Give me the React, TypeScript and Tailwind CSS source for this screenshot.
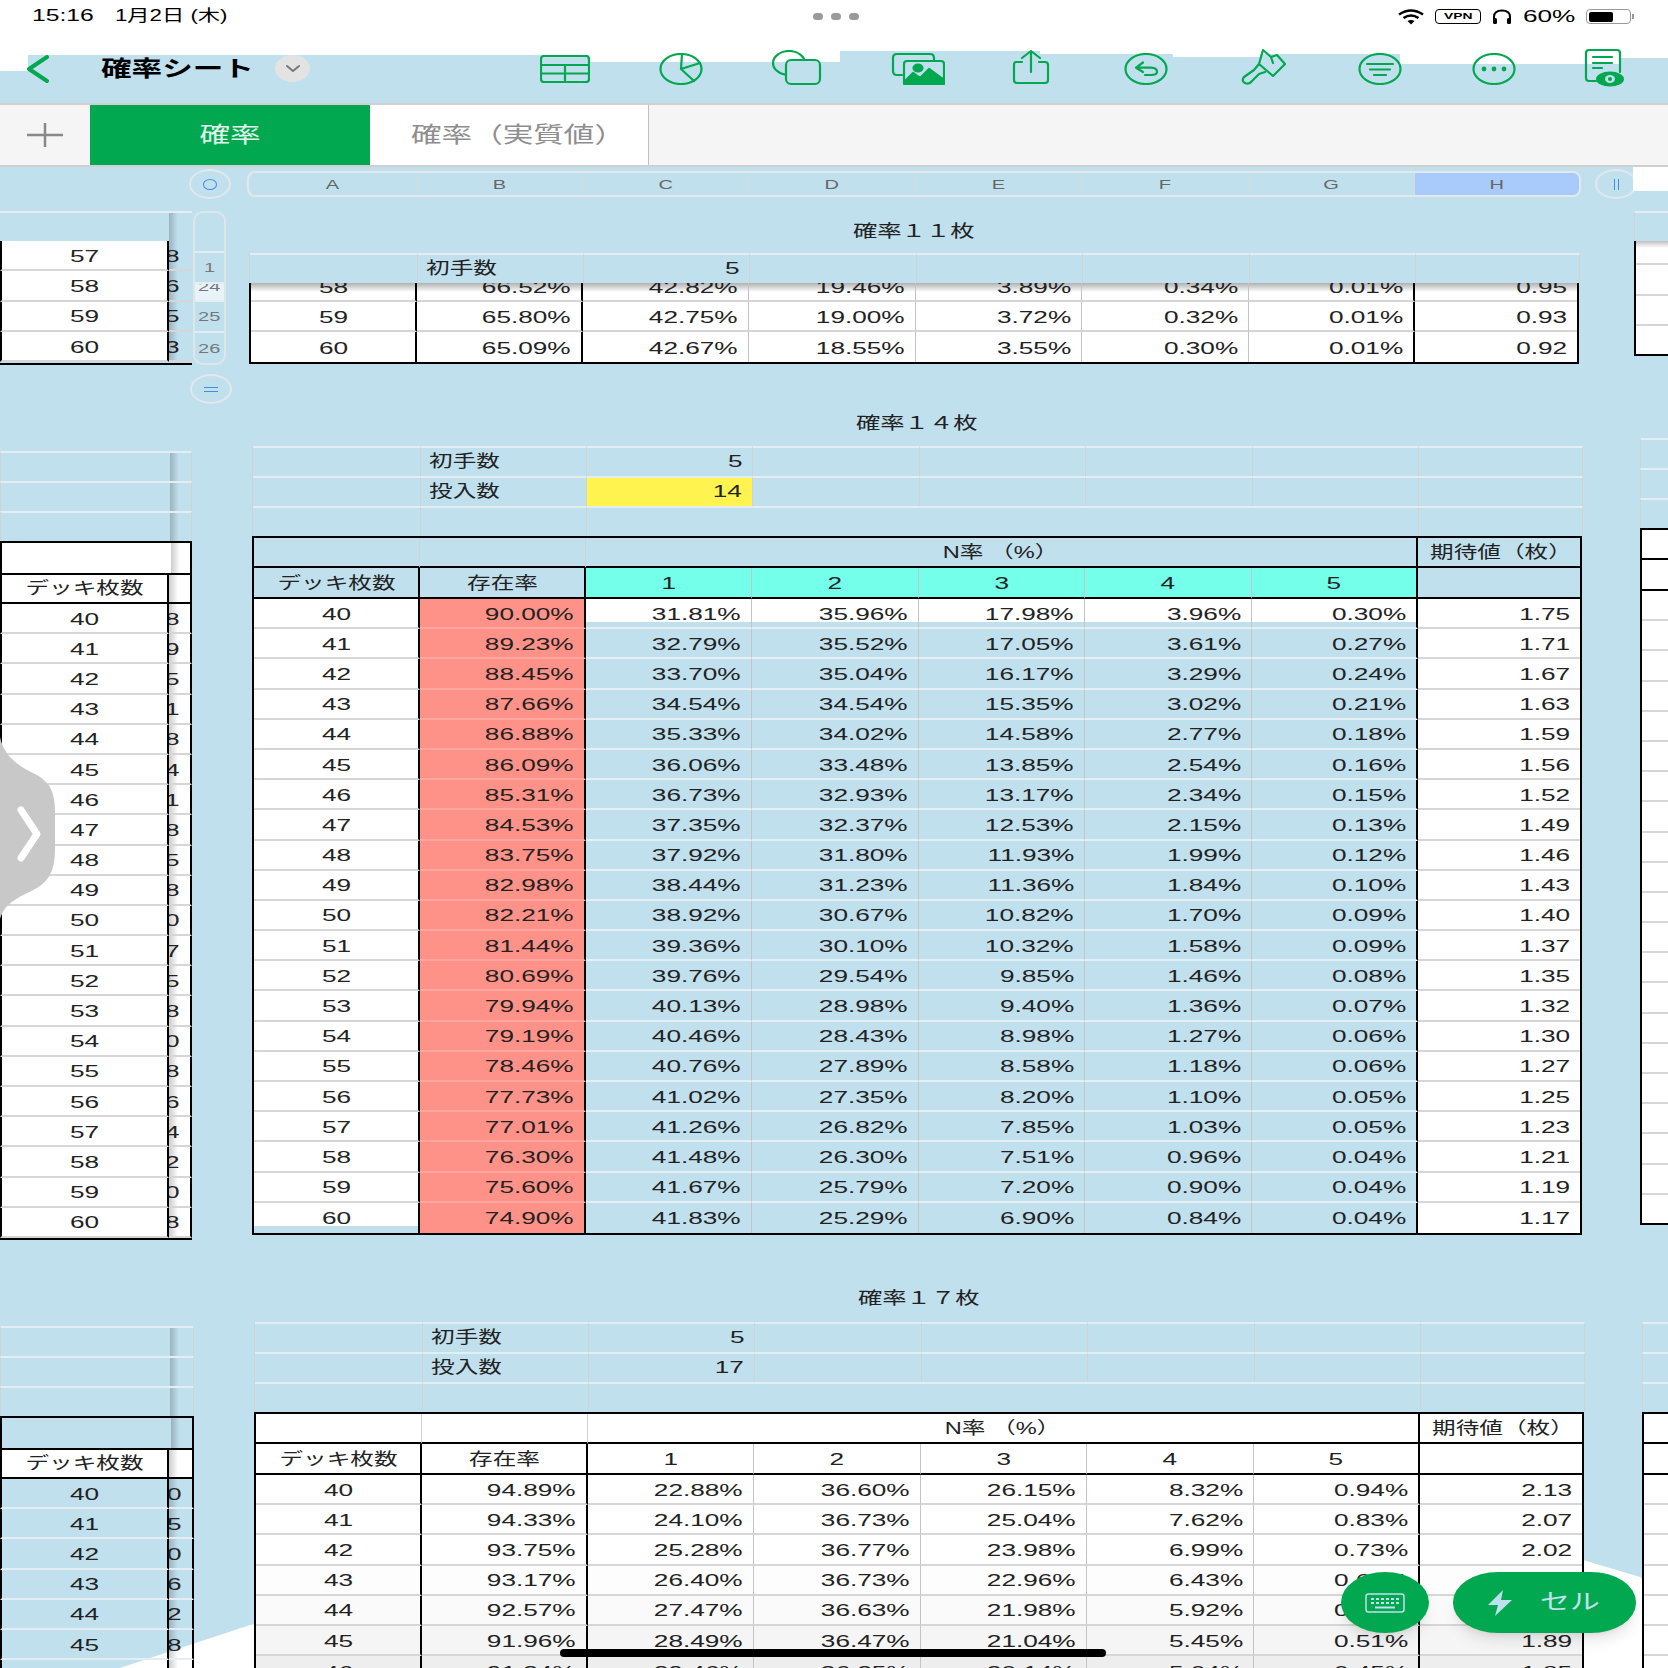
import type { ReactNode } from "react";
import clsx from "clsx";

const GREEN = "#02a84f";

const TABLE_14 = [
  "40 90.00% 31.81% 35.96% 17.98% 3.96% 0.30% 1.75",
  "41 89.23% 32.79% 35.52% 17.05% 3.61% 0.27% 1.71",
  "42 88.45% 33.70% 35.04% 16.17% 3.29% 0.24% 1.67",
  "43 87.66% 34.54% 34.54% 15.35% 3.02% 0.21% 1.63",
  "44 86.88% 35.33% 34.02% 14.58% 2.77% 0.18% 1.59",
  "45 86.09% 36.06% 33.48% 13.85% 2.54% 0.16% 1.56",
  "46 85.31% 36.73% 32.93% 13.17% 2.34% 0.15% 1.52",
  "47 84.53% 37.35% 32.37% 12.53% 2.15% 0.13% 1.49",
  "48 83.75% 37.92% 31.80% 11.93% 1.99% 0.12% 1.46",
  "49 82.98% 38.44% 31.23% 11.36% 1.84% 0.10% 1.43",
  "50 82.21% 38.92% 30.67% 10.82% 1.70% 0.09% 1.40",
  "51 81.44% 39.36% 30.10% 10.32% 1.58% 0.09% 1.37",
  "52 80.69% 39.76% 29.54% 9.85% 1.46% 0.08% 1.35",
  "53 79.94% 40.13% 28.98% 9.40% 1.36% 0.07% 1.32",
  "54 79.19% 40.46% 28.43% 8.98% 1.27% 0.06% 1.30",
  "55 78.46% 40.76% 27.89% 8.58% 1.18% 0.06% 1.27",
  "56 77.73% 41.02% 27.35% 8.20% 1.10% 0.05% 1.25",
  "57 77.01% 41.26% 26.82% 7.85% 1.03% 0.05% 1.23",
  "58 76.30% 41.48% 26.30% 7.51% 0.96% 0.04% 1.21",
  "59 75.60% 41.67% 25.79% 7.20% 0.90% 0.04% 1.19",
  "60 74.90% 41.83% 25.29% 6.90% 0.84% 0.04% 1.17",
].map((r) => r.split(" "));

const TABLE_17 = [
  "40 94.89% 22.88% 36.60% 26.15% 8.32% 0.94% 2.13",
  "41 94.33% 24.10% 36.73% 25.04% 7.62% 0.83% 2.07",
  "42 93.75% 25.28% 36.77% 23.98% 6.99% 0.73% 2.02",
  "43 93.17% 26.40% 36.73% 22.96% 6.43% 0.65% 1.97",
  "44 92.57% 27.47% 36.63% 21.98% 5.92% 0.58% 1.93",
  "45 91.96% 28.49% 36.47% 21.04% 5.45% 0.51% 1.89",
  "46 91.34% 29.46% 36.25% 20.14% 5.04% 0.45% 1.85",
].map((r) => r.split(" "));

const TINTS = ["bg-white", "bg-white", "bg-white", "bg-[#fdfdfd]", "bg-[#fafafa]", "bg-[#f5f5f5]", "bg-[#eeeeee]"];

const META_COLS = "grid grid-cols-[168px_166px_166px_167px_166px_167px_166px_164px] w-[1330px]";
const DATA_COLS = "grid grid-cols-[166px_166px_166px_167px_166px_167px_166px_162px]";
const SHADOW = "bg-[linear-gradient(90deg,rgba(0,0,0,.2),transparent_9px)]";

// the screenshot is stretched sideways, so the text is too
function T({ children, align = "right", className }: { children: ReactNode; align?: "left" | "center" | "right"; className?: string }) {
  const wide = typeof children === "string" && /[^\x00-\x7f]/.test(children);
  return (
    <span
      className={clsx(
        "inline-block whitespace-nowrap",
        wide ? "scale-x-[1.39]" : "scale-x-[1.54]",
        align === "left" && "origin-left",
        align === "center" && "origin-center",
        align === "right" && "origin-right",
        className
      )}
    >
      {children}
    </span>
  );
}

function Cell({ children, align = "right", className }: { children?: ReactNode; align?: "left" | "center" | "right"; className?: string }) {
  return (
    <div
      className={clsx(
        "flex items-center overflow-hidden",
        align === "left" && "justify-start pl-[8px]",
        align === "center" && "justify-center",
        align === "right" && "justify-end pr-[10px]",
        className
      )}
    >
      {children !== undefined && <T align={align}>{children}</T>}
    </div>
  );
}

function MetaCell({ children, align, className }: { children?: ReactNode; align?: "left" | "center" | "right"; className?: string }) {
  return <Cell align={align} className={clsx("h-[30px] pb-[2px] border-t-2 border-t-[#e4edf1] border-r border-r-[#cfd3d5]", className)}>{children}</Cell>;
}

function MetaRows({ count, highlight }: { count?: string; highlight?: boolean }) {
  return (
    <div className={clsx(META_COLS, "border-l border-l-[#cfd3d5]")}>
      <MetaCell />
      <MetaCell align="left">初手数</MetaCell>
      <MetaCell>5</MetaCell>
      <MetaCell />
      <MetaCell />
      <MetaCell />
      <MetaCell />
      <MetaCell />
      {count && (
        <>
          <MetaCell />
          <MetaCell align="left">投入数</MetaCell>
          <MetaCell className={highlight ? "bg-[#fff350]" : ""}>{count}</MetaCell>
          <MetaCell />
          <MetaCell />
          <MetaCell />
          <MetaCell />
          <MetaCell />
          <MetaCell />
          <MetaCell />
          <MetaCell className="col-span-5" />
          <MetaCell />
        </>
      )}
    </div>
  );
}

function DataRow({ row, index, coloured, last, tint }: { row: string[]; index: number; coloured?: boolean; last?: boolean; tint?: string }) {
  const plain = tint ?? "bg-white";
  const blue = coloured && index > 0;
  // the first coloured row still has a strip of the sheet colour at its foot
  const first = coloured && index === 0 ? "bg-[linear-gradient(#ffffff_82%,#c1e0ee_82%)] border-b-[#e6eff3]" : clsx(plain, "border-b-[#d6d6d6]");
  const body = blue ? "bg-transparent border-b-[#e6eff3]" : first;
  return (
    <>
      {row.map((value, i) => (
        <Cell
          key={i}
          align={i === 0 ? "center" : "right"}
          className={clsx(
            "h-[30.2px] pt-[2px]",
            !last && "border-b-2",
            i === 0 && "border-b-[#d6d6d6] border-r-2 border-r-black",
            i === 0 && (coloured && last ? "bg-[linear-gradient(#ffffff_78%,#c1e0ee_78%)]" : plain),
            i === 1 && (coloured ? "bg-[#ff9288] border-b-[#ffa79f] border-r-2 border-r-black" : clsx(plain, "border-b-[#d6d6d6] border-r-2 border-r-black")),
            i > 1 && i < 6 && clsx(body, "border-r border-r-[#c4c4c4]"),
            i === 6 && clsx(body, "border-r-2 border-r-black"),
            i === 7 && clsx(plain, "border-b-[#d6d6d6]")
          )}
        >
          {value}
        </Cell>
      ))}
    </>
  );
}

function BigTable({ rows, coloured, tinted, count }: { rows: string[][]; coloured?: boolean; tinted?: boolean; count: string }) {
  const cellBg = coloured ? "" : "bg-white";
  return (
    <div className="w-[1330px]">
      <MetaRows count={count} highlight={coloured} />
      <div className={clsx(DATA_COLS, "border-2 border-black")}>
        <Cell className={clsx("h-[30px] border-b-2 border-b-black border-r border-r-[#cfd3d5]", cellBg)} />
        <Cell className={clsx("h-[30px] border-b-2 border-b-black border-r border-r-[#cfd3d5]", cellBg)} />
        <Cell align="center" className={clsx("col-span-5 h-[30px] border-b-2 border-b-black border-r-2 border-r-black", cellBg)}>N率 （%）</Cell>
        <Cell align="left" className={clsx("h-[30px] border-b-2 border-b-black pl-[12px]", cellBg)}>期待値（枚）</Cell>

        <Cell align="center" className={clsx("h-[31px] pt-[1px] border-b-2 border-b-black border-r-2 border-r-black", cellBg)}>デッキ枚数</Cell>
        <Cell align="center" className={clsx("h-[31px] pt-[1px] border-b-2 border-b-black border-r-2 border-r-black", cellBg)}>存在率</Cell>
        {["1", "2", "3", "4", "5"].map((n) => (
          <Cell
            key={n}
            align="center"
            className={clsx(
              "h-[31px] pt-[1px] border-b-2 border-b-black",
              coloured ? "bg-[#73ffe9]" : "bg-white",
              n === "5" ? "border-r-2 border-r-black" : "border-r border-r-[#c4c4c4]"
            )}
          >
            {n}
          </Cell>
        ))}
        <Cell className={clsx("h-[31px] border-b-2 border-b-black", cellBg)} />

        {rows.map((row, i) => (
          <DataRow
            key={row[0]}
            row={row}
            index={i}
            coloured={coloured}
            last={i === rows.length - 1}
            tint={tinted ? TINTS[i] : undefined}
          />
        ))}
      </div>
    </div>
  );
}

function LeftRow({ label, tail, blue, closed, height = "h-[30.2px]" }: { label?: string; tail?: string; blue?: boolean; closed?: boolean; height?: string }) {
  return (
    <div className={clsx("grid grid-cols-[169px_1fr]", height)}>
      <Cell
        align="center"
        className={clsx(
          "pt-[2px] border-l-2 border-l-black border-r-2 border-r-black border-b-2",
          blue ? "border-b-[#e4edf1]" : "bg-white border-b-[#d6d6d6]"
        )}
      >
        {label}
      </Cell>
      <div
        className={clsx(
          "flex items-center justify-end overflow-hidden pt-[2px] border-b-2",
          SHADOW,
          blue ? "border-b-[#e4edf1]" : "border-b-[#d6d6d6]",
          closed && !blue && "bg-white",
          closed ? "pr-[11px] border-r-2 border-r-black" : "pr-[13px]"
        )}
      >
        {tail && <T>{tail}</T>}
      </div>
    </div>
  );
}

function LeftBlank() {
  return (
    <div className={clsx("grid grid-cols-[169px_1fr] h-[30px] border-t-2 border-t-[#e4edf1] border-l border-l-[#cfd3d5] border-r border-r-[#cfd3d5]")}>
      <div />
      <div className={SHADOW} />
    </div>
  );
}

function LeftTable({ tails, blue, width, rows }: { tails: string; blue?: boolean; width: string; rows: string[] }) {
  return (
    <div className={width}>
      <LeftBlank />
      <LeftBlank />
      <LeftBlank />
      <div className={clsx("grid grid-cols-[169px_1fr] h-[32px] border-2 border-black border-b-0", blue ? "" : "bg-white")}>
        <div />
        <div className={SHADOW} />
      </div>
      <div className="grid grid-cols-[169px_1fr] h-[31px] border-y-2 border-y-black bg-white">
        <Cell align="center" className="border-x-2 border-x-black">デッキ枚数</Cell>
        <div className={clsx(SHADOW, "border-r-2 border-r-black")} />
      </div>
      {rows.map((label, i) => (
        <LeftRow key={label} label={label} tail={tails[i]} blue={blue} closed />
      ))}
      <div className="h-[2px] bg-black" />
    </div>
  );
}

function RightSliver({ rows, start }: { rows: number; start: string }) {
  return (
    <div className={clsx("flex-1", start)}>
      {[0, 1, 2].map((i) => (
        <div key={i} className="h-[30px] border-t-2 border-t-[#e4edf1] border-l border-l-[#cfd3d5]" />
      ))}
      <div className="border-l-2 border-black bg-white">
        <div className="h-[32px] border-t-2 border-b-2 border-black" />
        <div className="h-[31px] border-b-2 border-black" />
        {Array.from({ length: rows }, (_, i) => (
          <div key={i} className={clsx("h-[30.2px] border-b-2", i === rows - 1 ? "border-b-black" : "border-b-[#d6d6d6]")} />
        ))}
      </div>
    </div>
  );
}

function Title({ children, className }: { children: string; className?: string }) {
  return (
    <div className={clsx("h-[42px] w-[1330px] flex items-center justify-center text-[17.5px]", className)}>
      <T align="center">{children}</T>
    </div>
  );
}

function ColumnHeader() {
  const cols = [
    ["A", "w-[168px]"],
    ["B", "w-[166px]"],
    ["C", "w-[166px]"],
    ["D", "w-[167px]"],
    ["E", "w-[166px]"],
    ["F", "w-[167px]"],
    ["G", "w-[166px]"],
  ];
  return (
    <div className="relative flex items-center h-[26px] mt-[4px] pl-[189px] text-[13px] text-[#666666]">
      <div className="w-[42px] h-[30px] rounded-[50%] border-2 border-[#e2e8eb] flex items-center justify-center">
        <div className="w-[14px] h-[11px] rounded-[50%] border border-[#3f8fdc]" />
      </div>
      <div className="ml-[16px] w-[1334px] h-[26px] flex rounded-[8px] border-2 border-[#e2e8eb] overflow-hidden">
        {cols.map(([name, width]) => (
          <div key={name} className={clsx(width, "flex items-center justify-center border-r border-r-[#d5dcdf]")}>
            <T align="center">{name}</T>
          </div>
        ))}
        <div className="flex-1 flex items-center justify-center bg-[#a9cbfb]">
          <T align="center">H</T>
        </div>
      </div>
      <div className="ml-[14px] w-[42px] h-[30px] rounded-[50%] border-2 border-[#e2e8eb] flex items-center justify-center gap-[3px]">
        <div className="w-px h-[11px] bg-[#3f8fdc]" />
        <div className="w-px h-[11px] bg-[#3f8fdc]" />
      </div>
      <div className="flex-1 self-start h-[24px] -mt-[4px] ml-[-4px] bg-white" />
    </div>
  );
}

function Section1() {
  const rows = [
    ["58", "66.52%", "42.82%", "19.46%", "3.89%", "0.34%", "0.01%", "0.95"],
    ["59", "65.80%", "42.75%", "19.00%", "3.72%", "0.32%", "0.01%", "0.93"],
    ["60", "65.09%", "42.67%", "18.55%", "3.55%", "0.30%", "0.01%", "0.92"],
  ];
  return (
    <section className="relative z-10 flex items-start h-[154px] mt-[14px]">
      <div className="flex w-[226px] shrink-0">
        <div className="w-[192px] border-b-2 border-b-black">
          <div className="grid grid-cols-[169px_1fr] h-[30px] border-t-2 border-t-[#e4edf1]">
            <div />
            <div className={SHADOW} />
          </div>
          {[["57", "8"], ["58", "6"], ["59", "5"], ["60", "3"]].map(([label, tail]) => (
            <LeftRow key={label} label={label} tail={tail} height="h-[30.3px]" />
          ))}
        </div>
        <div className="ml-px w-[33px] h-[154px] rounded-[10px] border-2 border-[#dfe6ea] overflow-hidden text-[#777777] text-[13px]">
          <div className="h-[40px] border-b-2 border-b-[#e4edf1]" />
          <Cell align="center" className="h-[31px] border-b-2 border-b-[#e4edf1]">1</Cell>
          <div className="h-[18px] overflow-hidden flex items-end justify-center border-b-2 border-b-[#e4edf1] bg-white/60">
            <T align="center" className="leading-[26px]">24</T>
          </div>
          <Cell align="center" className="h-[31px] border-b-2 border-b-[#e4edf1]">25</Cell>
          <Cell align="center" className="h-[30px]">26</Cell>
        </div>
      </div>
      <div className="ml-[23px] w-[1330px] shrink-0">
        <Title>確率１１枚</Title>
        <MetaRows />
        <div className={clsx(DATA_COLS, "border-x-2 border-b-2 border-black")}>
          {rows[0].map((value, i) => (
            <div
              key={i}
              className={clsx(
                "h-[19px] overflow-hidden flex items-end border-b-2 border-b-[#d6d6d6] bg-[linear-gradient(#b0b0b0,#ffffff_9px)]",
                i === 0 ? "justify-center" : "justify-end pr-[10px]",
                (i === 0 || i === 1 || i === 6) && "border-r-2 border-r-black",
                i > 1 && i < 6 && "border-r border-r-[#c4c4c4]"
              )}
            >
              <T align={i === 0 ? "center" : "right"} className="leading-[24px] shrink-0">{value}</T>
            </div>
          ))}
          <DataRow row={rows[1]} index={0} />
          <DataRow row={rows[2]} index={0} last />
        </div>
      </div>
      <div className="ml-[55px] flex-1">
        <div className="h-[30px] border-t-2 border-t-[#e4edf1] border-l border-l-[#cfd3d5]" />
        <div className="border-l-2 border-b-2 border-black bg-white">
          <div className="h-[24px] border-b-2 border-b-[#d6d6d6] bg-[linear-gradient(#c0c0c0,#ffffff_7px)]" />
          <div className="h-[31px] border-b-2 border-b-[#d6d6d6]" />
          <div className="h-[30px] border-b-2 border-b-[#d6d6d6]" />
          <div className="h-[28px]" />
        </div>
      </div>
    </section>
  );
}

function Section2() {
  return (
    <section className="relative z-10 flex items-start h-[834px] mt-[39px]">
      <div className="w-[226px] shrink-0 pt-[47px]">
        <LeftTable width="w-[192px]" tails="895184185807580864208" rows={TABLE_14.map((r) => r[0])} />
      </div>
      <div className="ml-[26px] w-[1330px] shrink-0">
        <Title className="pb-[2px]">確率１４枚</Title>
        <BigTable rows={TABLE_14} coloured count="14" />
      </div>
      <RightSliver rows={21} start="ml-[58px] pt-[34px]" />
    </section>
  );
}

function Section3() {
  return (
    <section className="relative z-10 flex items-start mt-[42px]">
      <div className="w-[226px] shrink-0 pt-[46px]">
        <LeftTable width="w-[194px]" tails="0506281" blue rows={TABLE_17.map((r) => r[0])} />
      </div>
      <div className="ml-[28px] w-[1330px] shrink-0">
        <Title className="pb-[4px]">確率１７枚</Title>
        <BigTable rows={TABLE_17} tinted count="17" />
      </div>
      <RightSliver rows={7} start="ml-[58px] pt-[42px]" />
    </section>
  );
}

function Sheet() {
  return (
    <div className="relative h-[1501px] overflow-hidden bg-[#c1e0ee]">
      <svg className="absolute inset-0" width="1668" height="1501" viewBox="0 0 1668 1501">
        <path d="M120 1501 L250 1458 C600 1393 1300 1378 1583 1393 L1640 1410 L1668 1433 L1668 1501 Z" fill="#ffffff" />
      </svg>
      <ColumnHeader />
      <Section1 />
      <Section2 />
      <Section3 />
      <div className="absolute z-20 left-[190px] top-[207px] w-[42px] h-[30px] rounded-[50%] border-2 border-[#e2e8eb] flex flex-col items-center justify-center gap-[3px]">
        <div className="w-[14px] h-px bg-[#3f8fdc]" />
        <div className="w-[14px] h-px bg-[#3f8fdc]" />
      </div>
    </div>
  );
}

const stroke = { fill: "none", stroke: GREEN, strokeWidth: 2.2, strokeLinecap: "round" as const, strokeLinejoin: "round" as const };

function Toolbar() {
  return (
    <div className="relative z-10 flex items-center h-[49px] pl-[27px] -mt-[1px]">
      <svg width="22" height="28" viewBox="0 0 22 28" {...stroke} strokeWidth={4}>
        <path d="M20 2 L2 14 L20 26" />
      </svg>
      <T align="left" className="ml-[52px] text-[22px] font-bold text-black">確率シート</T>
      <div className="ml-[64px] w-[35px] h-[27px] rounded-[50%] bg-[#e3e3e3] flex items-center justify-center">
        <svg width="16" height="9" viewBox="0 0 16 9" fill="none" stroke="#777777" strokeWidth="2" strokeLinecap="round" strokeLinejoin="round">
          <path d="M2 2 L8 7 L14 2" />
        </svg>
      </div>
      <svg className="ml-[230px]" width="50" height="28" viewBox="0 0 50 28" {...stroke}>
        <rect x="1" y="1" width="48" height="26" rx="3" />
        <path d="M1 10 H49 M1 18.5 H49 M25 10 V27" />
      </svg>
      <svg className="ml-[69px]" width="44" height="32" viewBox="0 0 44 32" {...stroke}>
        <ellipse cx="22" cy="16" rx="20.5" ry="15" />
        <path d="M22 16 L23 1 M22 16 L41 10 M22 16 L35 28" />
      </svg>
      <svg className="ml-[69px] -mt-[2px]" width="50" height="36" viewBox="0 0 50 36" {...stroke}>
        <ellipse cx="17" cy="13" rx="16" ry="12" />
        <rect x="14" y="10" width="34" height="24" rx="5" fill="#c1e0ee" />
      </svg>
      <svg className="ml-[69px]" width="54" height="34" viewBox="0 0 54 34" {...stroke}>
        <path d="M11 23 H6 Q2 23 2 19 V6 Q2 2 6 2 H39 Q43 2 43 6 V9" />
        <rect x="13" y="9" width="40" height="23" rx="3" />
        <path d="M13 30 L22 21 L29 26 L38 17 L53 28 V32 H13 Z" fill={GREEN} />
        <ellipse cx="27" cy="16" rx="4.5" ry="3.5" fill={GREEN} />
      </svg>
      <svg className="ml-[66px] -mt-[4px]" width="40" height="36" viewBox="0 0 40 36" {...stroke}>
        <path d="M11 13 H5 Q3 13 3 16 V31 Q3 34 6 34 H34 Q37 34 37 31 V16 Q37 13 34 13 H28" />
        <path d="M20 2 V23 M11 9 L20 2 L29 9" />
      </svg>
      <svg className="ml-[73px]" width="44" height="32" viewBox="0 0 44 32" {...stroke}>
        <ellipse cx="22" cy="16" rx="20.5" ry="15" />
        <path d="M19 9.5 L12 14.7 L19 19 M12 14.7 H27 Q33 15 33 18.7 Q33 22 27 22 H21" />
      </svg>
      <svg className="ml-[72px] -mt-[4px]" width="46" height="38" viewBox="0 0 46 38" {...stroke}>
        <path d="M23 2 L31 9 L37 7 L45 16 L33 28 L19 16 Z" />
        <path d="M31 9 L33 15 M19 16 L14 22 L4 29 Q1 33 5 35 Q9 37 12 33 L19 26 L25 24" />
      </svg>
      <svg className="ml-[72px]" width="44" height="32" viewBox="0 0 44 32" {...stroke}>
        <ellipse cx="22" cy="16" rx="20.5" ry="15" />
        <path d="M9 11 H35 M12 16.5 H32 M16 22 H28" />
      </svg>
      <svg className="ml-[70px]" width="44" height="32" viewBox="0 0 44 32" {...stroke}>
        <ellipse cx="22" cy="16" rx="20.5" ry="15" />
        <circle cx="12" cy="16" r="2.4" fill={GREEN} stroke="none" />
        <circle cx="22" cy="16" r="2.4" fill={GREEN} stroke="none" />
        <circle cx="32" cy="16" r="2.4" fill={GREEN} stroke="none" />
      </svg>
      <svg className="ml-[68px] -mt-[2px]" width="42" height="40" viewBox="0 0 42 40" {...stroke}>
        <path d="M12 33 H5 Q2 33 2 30 V5 Q2 2 5 2 H33 Q36 2 36 5 V24" />
        <path d="M9 9 H28 M9 15 H28 M9 20 H18" />
        <ellipse cx="26" cy="31" rx="14" ry="7.5" fill={GREEN} stroke="none" />
        <ellipse cx="26" cy="31" rx="5" ry="4" fill="#c1e0ee" stroke="none" />
        <circle cx="26" cy="31" r="2" fill={GREEN} stroke="none" />
      </svg>
    </div>
  );
}

function StatusBar() {
  return (
    <div className="relative z-10 flex items-center h-[32px] pl-[32px] text-[16px] text-black">
      <T align="left">15:16</T>
      <T align="left" className="ml-[43px]">1月2日 (木)</T>
      <div className="absolute left-[813px] top-[13px] flex gap-[8px]">
        <div className="w-[10px] h-[7px] rounded-full bg-[#9a9a9a]" />
        <div className="w-[10px] h-[7px] rounded-full bg-[#9a9a9a]" />
        <div className="w-[10px] h-[7px] rounded-full bg-[#9a9a9a]" />
      </div>
      <div className="absolute left-[1397px] top-[8px] flex items-center">
        <svg width="28" height="16" viewBox="0 0 28 16" fill="none" stroke="#000000" strokeWidth="2.6">
          <path d="M2 5.5 Q14 -2.5 26 5.5 M6.5 9 Q14 4 21.5 9" />
          <path d="M10.5 12 Q14 10 17.5 12 L14 15.5 Z" fill="#000000" stroke="none" />
        </svg>
        <div className="ml-[10px] w-[46px] h-[15px] rounded-[4px] border-[1.5px] border-black flex items-center justify-center text-[9px] font-bold leading-none">
          <T align="center">VPN</T>
        </div>
        <svg className="ml-[11px]" width="20" height="16" viewBox="0 0 20 16" fill="none" stroke="#000000" strokeWidth="2">
          <path d="M2 12 V8 Q2 1.5 10 1.5 Q18 1.5 18 8 V12" />
          <rect x="1" y="9" width="4" height="6" rx="1.5" fill="#000000" stroke="none" />
          <rect x="15" y="9" width="4" height="6" rx="1.5" fill="#000000" stroke="none" />
        </svg>
        <T align="left" className="ml-[11px] text-[17px]">60%</T>
        <div className="ml-[29px] w-[45px] h-[15px] rounded-[4px] border-[1.5px] border-[#999999] p-[1.5px]">
          <div className="w-[60%] h-full rounded-[2px] bg-black" />
        </div>
        <div className="ml-px w-[2px] h-[5px] bg-[#999999]" />
      </div>
    </div>
  );
}

function Header() {
  // the blue band has a stepped top edge in the capture
  const steps = [
    "w-[28px] h-[71px]",
    "w-[561px] h-[55px]",
    "w-[251px] h-[62px]",
    "w-[200px] h-[51px]",
    "w-[133px] h-[54px]",
    "w-[87px] h-[57px]",
    "w-[140px] h-[54px]",
    "w-[220px] h-[64px]",
    "w-[48px] h-[58px]",
  ];
  return (
    <div className="relative h-[103px] bg-[#c1e0ee]">
      <div className="absolute inset-x-0 top-0 flex items-start">
        {steps.map((s) => (
          <div key={s} className={clsx(s, "bg-white")} />
        ))}
      </div>
      <StatusBar />
      <div className="h-[13px]" />
      <Toolbar />
    </div>
  );
}

function Tabs() {
  return (
    <div className="flex h-[64px] border-y-2 border-y-[#d0d0d0] bg-[#f5f5f5] text-[22px]">
      <div className="w-[90px] flex items-center justify-center">
        <svg width="36" height="24" viewBox="0 0 36 24" stroke="#888888" strokeWidth="2.5">
          <path d="M0 12 H36 M18 0 V24" />
        </svg>
      </div>
      <div className="w-[280px] flex items-center justify-center bg-[#02a84f] text-[#e4f5ee]">
        <T align="center">確率</T>
      </div>
      <div className="w-[279px] flex items-center justify-center pl-[18px] bg-white border-r border-r-[#c0c0c0] text-[#8e8e8e]">
        <T align="center">確率（実質値）</T>
      </div>
    </div>
  );
}

function FloatingButtons() {
  return (
    <>
      <div className="absolute z-30 left-[1341px] top-[1572px] w-[88px] h-[61px] rounded-[50%] bg-[#02a84f] shadow-lg flex items-center justify-center">
        <svg width="40" height="20" viewBox="0 0 40 20" fill="none" stroke="#c1e0ee" strokeWidth="1.5">
          <rect x="1" y="1" width="38" height="18" rx="2.5" />
          <path d="M6 6 H34 M6 10 H34" strokeDasharray="3 2" strokeWidth="2" />
          <path d="M10 14.5 H30" strokeWidth="2" />
        </svg>
      </div>
      <div className="absolute z-30 left-[1453px] top-[1572px] w-[183px] h-[61px] rounded-[45px/30px] bg-[#02a84f] shadow-lg flex items-center pl-[35px] text-[#c1e0ee] text-[21.5px]">
        <svg width="24" height="26" viewBox="0 0 24 26" fill="#c1e0ee">
          <path d="M15 0 L0 15 H10 L7 26 L24 10 H13 Z" />
        </svg>
        <T align="left" className="ml-[28px]">セル</T>
      </div>
    </>
  );
}

function EdgeHandle() {
  return (
    <svg className="absolute z-30 left-0 top-[737px]" width="56" height="182" viewBox="0 0 56 182">
      <path d="M0 0 C4 20 20 30 35 37 C50 45 55 55 55 75 L55 112 C55 135 48 145 35 152 C20 160 5 165 0 182 Z" fill="#c8c8c8" />
      <path d="M21 73 L37 97 L21 121" fill="none" stroke="#ffffff" strokeWidth="7" strokeLinecap="round" strokeLinejoin="round" />
    </svg>
  );
}

export default function App() {
  return (
    <div className="relative w-[1668px] h-[1668px] overflow-hidden bg-white text-[17px] leading-none text-[#222222] [font-family:'Liberation_Sans','Noto_Sans_CJK_JP',sans-serif]">
      <Header />
      <Tabs />
      <Sheet />
      <EdgeHandle />
      <FloatingButtons />
      <div className="absolute z-30 left-[560px] top-[1649px] w-[546px] h-[8px] rounded-full bg-black" />
    </div>
  );
}
